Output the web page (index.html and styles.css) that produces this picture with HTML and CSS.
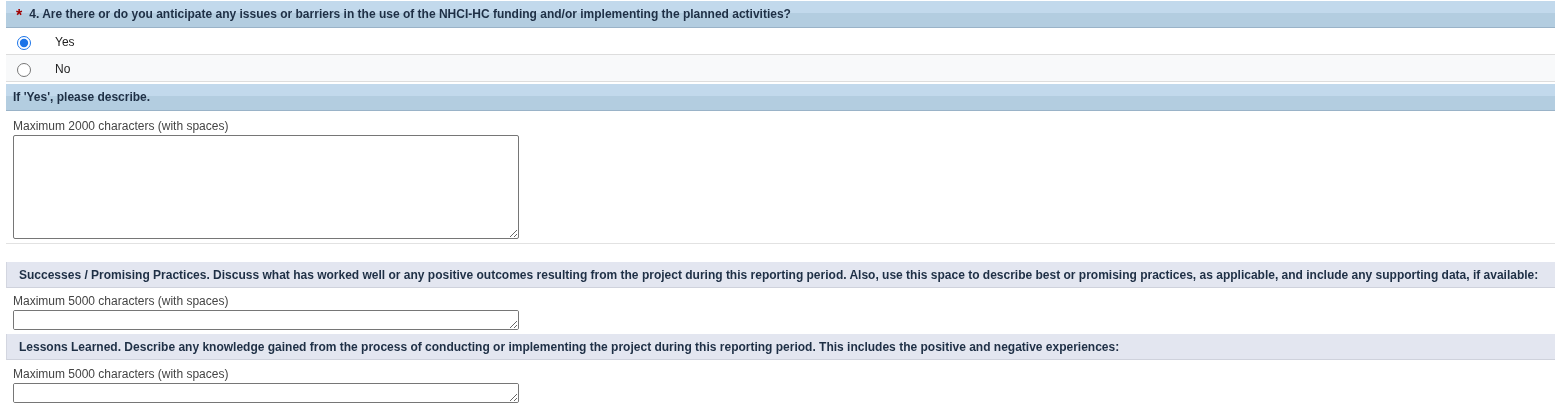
FILE: index.html
```html
<!DOCTYPE html>
<html lang="en">
<head>
    <meta charset="UTF-8">
    <title>Reporting Questions</title>
    <link rel="stylesheet" href="styles.css">
</head>
<body>
    <div class="form">
        <div class="q-header">
            <span class="req">*</span>
            4. Are there or do you anticipate any issues or barriers in the use of the NHCI-HC funding and/or implementing the planned activities?
        </div>
        <label class="opt">
            <input type="radio" name="q4" checked>
            <span>Yes</span>
        </label>
        <label class="opt alt">
            <input type="radio" name="q4">
            <span>No</span>
        </label>
        <div class="q-header plain">If 'Yes', please describe.</div>
        <div class="field boxed">
            <div class="hint">Maximum 2000 characters (with spaces)</div>
            <textarea class="big"></textarea>
        </div>

        <div class="sec-header">Successes / Promising Practices. Discuss what has worked well or any positive outcomes resulting from the project during this reporting period. Also, use this space to describe best or promising practices, as applicable, and include any supporting data, if available:</div>
        <div class="field">
            <div class="hint">Maximum 5000 characters (with spaces)</div>
            <textarea class="small"></textarea>
        </div>

        <div class="sec-header">Lessons Learned. Describe any knowledge gained from the process of conducting or implementing the project during this reporting period. This includes the positive and negative experiences:</div>
        <div class="field">
            <div class="hint">Maximum 5000 characters (with spaces)</div>
            <textarea class="small"></textarea>
        </div>
    </div>
</body>
</html>
```

FILE: styles.css
```css
* {
    box-sizing: border-box;
}

body {
    margin: 0;
    background: #ffffff;
    font-family: 'Liberation Sans', Arial, sans-serif;
    font-size: 12px;
    color: #333333;
}

.form {
    padding: 1px 0 0 6px;
}

.q-header {
    height: 27px;
    padding: 0 8px;
    display: flex;
    align-items: center;
    background: linear-gradient(to bottom, #c2d9ec 0, #c2d9ec 12px, #b3cde0 12px, #b3cde0 100%);
    border-bottom: 1px solid #9ab3c8;
    font-size: 12px;
    font-weight: bold;
    color: #1e2f45;
    white-space: nowrap;
}

.q-header .req {
    color: #a00000;
    font-size: 16px;
    margin: 3px 7px 0 2px;
}

.q-header.plain {
    margin-top: 2px;
    padding-left: 7px;
}

.opt {
    display: flex;
    align-items: center;
    height: 27px;
    padding-top: 2px;
    border-bottom: 1px solid #dddddd;
    color: #222222;
}

.opt.alt {
    background: #f8f9fa;
}

.opt input {
    width: 14px;
    height: 14px;
    margin: 1px 0 0 11px;
    accent-color: #1a73e8;
}

.opt span {
    margin-left: 24px;
}

.field {
    padding: 6px 7px 0;
}

.field:last-child {
    padding-top: 7px;
}

.field.boxed {
    padding-top: 8px;
    padding-bottom: 4px;
    border-bottom: 1px solid #e2e2e2;
    margin-bottom: 18px;
}

.hint {
    color: #444444;
    line-height: 14px;
    margin-bottom: 2px;
}

textarea {
    display: block;
    width: 506px;
    border: 1px solid #767676;
    border-radius: 2px;
    font-family: inherit;
    resize: vertical;
}

textarea.big {
    height: 104px;
}

textarea.small {
    height: 20px;
}

.sec-header {
    height: 26px;
    padding: 0 12px;
    display: flex;
    align-items: center;
    background: #e3e6f0;
    border-left: 1px solid #d3d6e0;
    border-bottom: 1px solid #cfd2dc;
    font-size: 12px;
    font-weight: bold;
    color: #1e2f45;
    white-space: nowrap;
}

.field + .sec-header {
    margin-top: 4px;
}
```
